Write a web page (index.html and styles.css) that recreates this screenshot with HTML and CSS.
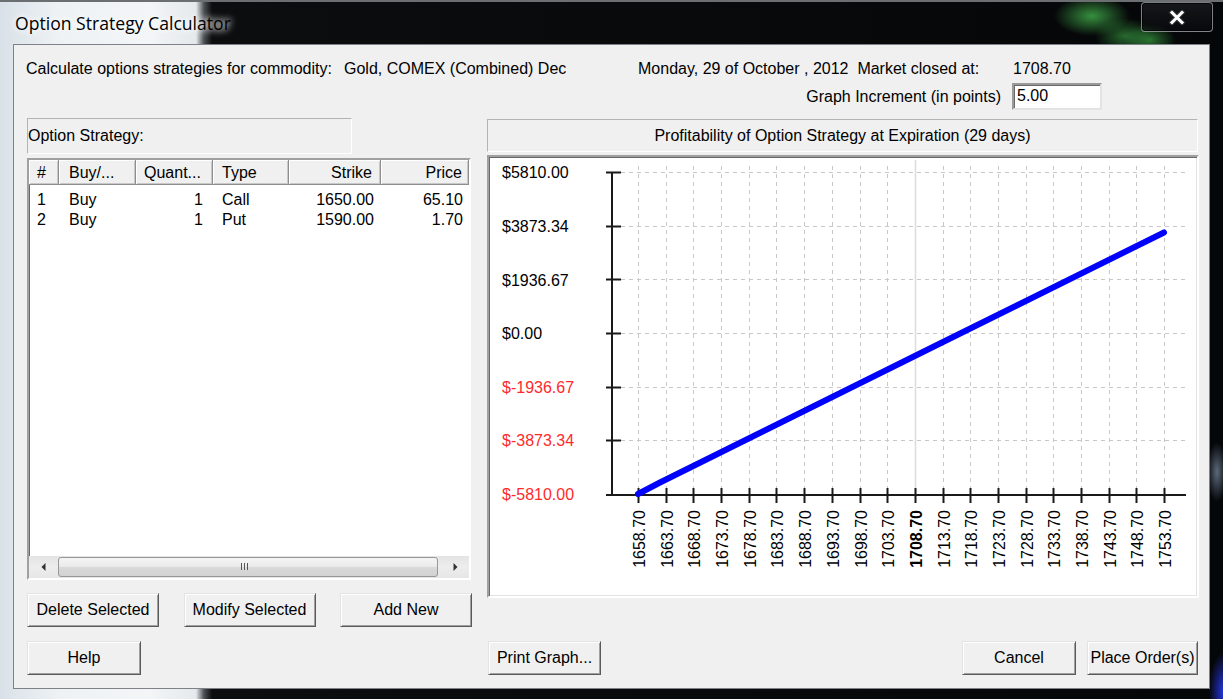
FILE: index.html
```html
<!DOCTYPE html>
<html>
<head>
<meta charset="utf-8">
<link rel="stylesheet" href="styles.css">
</head>
<body>
<div class="window">
  <div class="titlebar">
    <div class="title">Option Strategy Calculator</div>
    <div class="close">
      <svg width="18" height="15" viewBox="0 0 18 15"><path d="M4 2.5 L14 12.5 M14 2.5 L4 12.5" stroke="#333" stroke-width="5" stroke-linecap="square"/><path d="M4 2.5 L14 12.5 M14 2.5 L4 12.5" stroke="#fff" stroke-width="3" stroke-linecap="square"/></svg>
    </div>
  </div>
  <div class="client">
    <div class="info-row">
      <span class="c1">Calculate options strategies for commodity:</span>
      <span class="c2">Gold, COMEX (Combined) Dec</span>
      <span class="c3">Monday, 29 of October , 2012&nbsp; Market closed at:</span>
      <span class="c4">1708.70</span>
    </div>
    <div class="inc-row">
      <span class="inc-label">Graph Increment (in points)</span>
      <div class="input">5.00</div>
    </div>
    <div class="main">
      <div class="left">
        <div class="etched strategy-label">Option Strategy:</div>
        <div class="list">
          <div class="lv-head">
            <div class="hc w1">#</div>
            <div class="hc w2">Buy/...</div>
            <div class="hc w3">Quant...</div>
            <div class="hc w4">Type</div>
            <div class="hc w5 r">Strike</div>
            <div class="hc w6 r">Price</div>
          </div>
          <div class="lv-body">
            <div class="lv-row">
              <div class="dc w1">1</div>
              <div class="dc w2">Buy</div>
              <div class="dc w3 r">1</div>
              <div class="dc w4">Call</div>
              <div class="dc w5 r">1650.00</div>
              <div class="dc w6 r">65.10</div>
            </div>
            <div class="lv-row">
              <div class="dc w1">2</div>
              <div class="dc w2">Buy</div>
              <div class="dc w3 r">1</div>
              <div class="dc w4">Put</div>
              <div class="dc w5 r">1590.00</div>
              <div class="dc w6 r">1.70</div>
            </div>
          </div>
          <div class="hscroll">
            <div class="sb-arrow sb-left"><svg width="5" height="8" viewBox="0 0 5 8"><polygon points="4.5,0 0.5,4 4.5,8" fill="#333"/></svg></div>
            <div class="sb-thumb"><svg width="9" height="8" viewBox="0 0 9 8"><path d="M1.5 0 V7 M4.5 0 V7 M7.5 0 V7" stroke="#555" stroke-width="1"/></svg></div>
            <div class="sb-arrow sb-right"><svg width="5" height="8" viewBox="0 0 5 8"><polygon points="0.5,0 4.5,4 0.5,8" fill="#333"/></svg></div>
          </div>
        </div>
        <div class="btn-row">
          <div class="btn b132">Delete Selected</div>
          <div class="btn b132">Modify Selected</div>
          <div class="btn b132">Add New</div>
        </div>
      </div>
      <div class="right">
        <div class="etched chart-title">Profitability of Option Strategy at Expiration (29 days)</div>
        <div class="chart">
          <svg width="708" height="439" viewBox="489 157 708 439" class="plot">
            <g stroke="#c8c8c8" stroke-width="1" stroke-dasharray="4 4" fill="none">
              <path d="M621 172.5 H1186 M621 226.5 H1186 M621 279.5 H1186 M621 333.5 H1186 M621 387.5 H1186 M621 440.5 H1186"/>
              <path d="M638.5 166 V495 M666.5 166 V495 M693.5 166 V495 M721.5 166 V495 M749.5 166 V495 M776.5 166 V495 M804.5 166 V495 M832.5 166 V495 M860.5 166 V495 M887.5 166 V495 M943.5 166 V495 M970.5 166 V495 M998.5 166 V495 M1026.5 166 V495 M1053.5 166 V495 M1081.5 166 V495 M1109.5 166 V495 M1136.5 166 V495 M1164.5 166 V495"/>
            </g>
            <path d="M915.5 160 V495" stroke="#dcdcdc" stroke-width="1.5"/>
            <g stroke="#1a1a1a" stroke-width="2" fill="none">
              <path d="M612 172 V496"/>
              <path d="M606 495 H1186"/>
              <path d="M606 172.5 H621 M606 226.5 H621 M606 279.5 H621 M606 333.5 H621 M606 387.5 H621 M606 440.5 H621"/>
              <path d="M638.5 488 V503 M666.5 488 V503 M693.5 488 V503 M721.5 488 V503 M749.5 488 V503 M776.5 488 V503 M804.5 488 V503 M832.5 488 V503 M860.5 488 V503 M887.5 488 V503 M915.5 488 V503 M943.5 488 V503 M970.5 488 V503 M998.5 488 V503 M1026.5 488 V503 M1053.5 488 V503 M1081.5 488 V503 M1109.5 488 V503 M1136.5 488 V503 M1164.5 488 V503"/>
            </g>
            <polyline points="638,494 660,482.5 945,341 1164,232.5" fill="none" stroke="#0000ff" stroke-width="6" stroke-linecap="round" stroke-linejoin="round"/>
            <g class="ylab">
              <text x="502" y="178">$5810.00</text>
              <text x="502" y="232">$3873.34</text>
              <text x="502" y="286">$1936.67</text>
              <text x="502" y="339">$0.00</text>
              <text x="502" y="393" class="neg">$-1936.67</text>
              <text x="502" y="446" class="neg">$-3873.34</text>
              <text x="502" y="500" class="neg">$-5810.00</text>
            </g>
            <g class="xlab" text-anchor="end">
              <text transform="translate(644.5,510) rotate(-90)">1658.70</text>
              <text transform="translate(672.5,510) rotate(-90)">1663.70</text>
              <text transform="translate(699.5,510) rotate(-90)">1668.70</text>
              <text transform="translate(727.5,510) rotate(-90)">1673.70</text>
              <text transform="translate(755.5,510) rotate(-90)">1678.70</text>
              <text transform="translate(782.5,510) rotate(-90)">1683.70</text>
              <text transform="translate(810.5,510) rotate(-90)">1688.70</text>
              <text transform="translate(838.5,510) rotate(-90)">1693.70</text>
              <text transform="translate(866.5,510) rotate(-90)">1698.70</text>
              <text transform="translate(893.5,510) rotate(-90)">1703.70</text>
              <text transform="translate(921.5,510) rotate(-90)" class="bold">1708.70</text>
              <text transform="translate(949.5,510) rotate(-90)">1713.70</text>
              <text transform="translate(976.5,510) rotate(-90)">1718.70</text>
              <text transform="translate(1004.5,510) rotate(-90)">1723.70</text>
              <text transform="translate(1032.5,510) rotate(-90)">1728.70</text>
              <text transform="translate(1059.5,510) rotate(-90)">1733.70</text>
              <text transform="translate(1087.5,510) rotate(-90)">1738.70</text>
              <text transform="translate(1115.5,510) rotate(-90)">1743.70</text>
              <text transform="translate(1142.5,510) rotate(-90)">1748.70</text>
              <text transform="translate(1170.5,510) rotate(-90)">1753.70</text>
            </g>
          </svg>
        </div>
      </div>
    </div>
    <div class="footer">
      <div class="f-left">
        <div class="btn b-help">Help</div>
      </div>
      <div class="f-right">
        <div class="btn b-print">Print Graph...</div>
        <div class="spacer"></div>
        <div class="btn b-cancel">Cancel</div>
        <div class="btn b-place">Place Order(s)</div>
      </div>
    </div>
  </div>
</div>
</body>
</html>
```

FILE: styles.css
```css
html, body {
  margin: 0;
  padding: 0;
  background: #000;
}

.window {
  width: 1223px;
  height: 699px;
  box-sizing: border-box;
  display: flex;
  flex-direction: column;
  overflow: hidden;
  border-top: 2px solid #6c6f72;
  background:
    radial-gradient(ellipse 38px 20px at 1092px 14px, rgba(70, 190, 80, 0.75), rgba(70, 190, 80, 0) 100%),
    radial-gradient(ellipse 30px 18px at 1125px 34px, rgba(60, 170, 70, 0.6), rgba(60, 170, 70, 0) 100%),
    radial-gradient(ellipse 26px 16px at 1150px 38px, rgba(70, 200, 80, 0.55), rgba(70, 200, 80, 0) 100%),
    radial-gradient(ellipse 14px 40px at 1223px 690px, rgba(40, 60, 255, 0.85), rgba(40, 60, 255, 0) 100%),
    radial-gradient(ellipse 10px 30px at 1217px 470px, rgba(150, 170, 200, 0.6), rgba(150, 170, 200, 0) 100%),
    linear-gradient(to right, #d9e1e8 0, #eef2f5 60px, #f3f5f7 150px, #e4e9ed 196px, #4c5053 204px, #0c0d0f 212px, #050608 100%);
}

.titlebar {
  height: 42px;
  display: flex;
  align-items: flex-start;
  flex: none;
}

.title {
  font-family: "Open Sans", "Noto Sans", sans-serif;
  font-size: 17.6px;
  color: #000;
  padding-left: 15px;
  padding-top: 9px;
  line-height: 24px;
  text-shadow: 0 0 6px #fff, 0 0 10px #fff;
}

.close {
  margin-left: auto;
  margin-right: 10px;
  margin-top: 0;
  width: 72px;
  height: 30px;
  box-sizing: border-box;
  border: 1px solid rgba(200, 205, 210, 0.6);
  border-radius: 4px;
  background: linear-gradient(rgba(40, 44, 48, 0.45), rgba(10, 12, 14, 0.6));
  box-shadow: inset 0 0 0 1px rgba(0, 0, 0, 0.7);
  display: flex;
  align-items: center;
  justify-content: center;
}

.client {
  margin-left: 13px;
  width: 1197px;
  height: 645px;
  box-sizing: border-box;
  border: 1px solid #7d8288;
  background: #f0f0f0;
  font-family: "Liberation Sans", Arial, sans-serif;
  font-size: 16px;
  color: #000;
  flex: none;
}

.info-row {
  margin-top: 15px;
  height: 18px;
  line-height: 18px;
  padding-left: 12px;
  display: flex;
  white-space: nowrap;
}

.c1 { width: 318px; flex: none; }
.c2 { width: 294px; flex: none; }
.c3 { width: 375px; flex: none; }

.inc-row {
  margin-top: 5px;
  height: 27px;
  display: flex;
  justify-content: flex-end;
  align-items: center;
  padding-right: 107px;
}

.inc-label {
  margin-right: 11px;
}

.input {
  width: 90px;
  height: 27px;
  box-sizing: border-box;
  background: #fff;
  border-style: solid;
  border-width: 2px;
  border-color: #9a9a9a #e3e3e3 #e3e3e3 #9a9a9a;
  box-shadow: inset 1px 1px 0 #696969;
  padding-left: 3px;
  line-height: 22px;
}

.main {
  margin-top: 8px;
  padding-left: 13px;
  display: grid;
  grid-template-columns: 445px 712px;
  column-gap: 15px;
}

.left {
  display: flex;
  flex-direction: column;
}

.etched {
  box-sizing: border-box;
  border-style: solid;
  border-width: 1px;
  border-color: #b4b4b4 #ffffff #ffffff #b4b4b4;
  display: flex;
  align-items: center;
}

.strategy-label {
  width: 325px;
  height: 36px;
  padding-left: 0;
}

.list {
  margin-top: 4px;
  width: 444px;
  height: 422px;
  box-sizing: border-box;
  border-style: solid;
  border-width: 2px;
  border-color: #a0a0a0 #ffffff #ffffff #a0a0a0;
  box-shadow: inset 1px 1px 0 #696969;
  background: #fff;
  display: flex;
  flex-direction: column;
}

.lv-head {
  display: flex;
  height: 25px;
  flex: none;
}

.hc {
  box-sizing: border-box;
  height: 25px;
  line-height: 25px;
  background: #f0f0f0;
  border-right: 1px solid #8e8e8e;
  border-bottom: 1px solid #8e8e8e;
  box-shadow: inset 1px 1px 0 #fff, inset -1px -1px 0 #c8c8c8;
  padding: 0 8px;
  white-space: nowrap;
  overflow: hidden;
}

.w1 { width: 30px; padding-left: 8px; }
.w2 { width: 77px; padding-left: 10px; }
.w3 { width: 77px; }
.w4 { width: 76px; padding-left: 9px; }
.w5 { width: 92px; }
.w6 { width: 88px; padding-right: 6px; }

.r { text-align: right; }

.lv-body {
  flex: 1;
  padding-top: 5px;
}

.lv-row {
  display: flex;
  height: 20px;
  line-height: 20px;
}

.dc {
  box-sizing: border-box;
  padding: 0 8px;
  white-space: nowrap;
}

.dc.w1 { padding-left: 8px; }
.dc.w2 { padding-left: 10px; }
.dc.w4 { padding-left: 9px; }
.dc.w3 { padding-right: 10px; }
.dc.w5 { padding-right: 7px; }
.dc.w6 { padding-right: 6px; }

.hscroll {
  height: 22px;
  flex: none;
  display: flex;
  background: linear-gradient(to bottom, #e4e4e4, #ededed 50%, #e6e6e6);
}

.sb-arrow {
  display: flex;
  align-items: center;
}

.sb-left {
  width: 28px;
  flex: none;
  justify-content: center;
}

.sb-right {
  flex: 1;
  justify-content: center;
  padding-left: 3px;
}

.sb-thumb {
  width: 380px;
  flex: none;
  margin-left: 1px;
  margin-top: 1px;
  height: 20px;
  box-sizing: border-box;
  border: 1px solid #979797;
  border-radius: 3px;
  background: linear-gradient(to bottom, #f5f5f5, #e9e9e9 50%, #d9d9d9 51%, #d3d3d3);
  display: flex;
  align-items: center;
  justify-content: center;
  padding-right: 8px;
}

.btn-row {
  margin-top: 13px;
  height: 34px;
  display: flex;
  justify-content: space-between;
}

.btn {
  box-sizing: border-box;
  height: 34px;
  background: #f0f0f0;
  border-style: solid;
  border-width: 1px;
  border-color: #e3e3e3 #5a5a5a #5a5a5a #e3e3e3;
  box-shadow: inset 1px 1px 0 #ffffff, inset -1px -1px 0 #a0a0a0;
  display: flex;
  align-items: center;
  justify-content: center;
  white-space: nowrap;
}

.b132 { width: 132px; }

.right {
  display: flex;
  flex-direction: column;
}

.chart-title {
  margin-top: 1px;
  width: 711px;
  height: 33px;
  justify-content: center;
}

.chart {
  margin-top: 3px;
  width: 712px;
  height: 443px;
  box-sizing: border-box;
  border-style: solid;
  border-width: 2px;
  border-color: #a0a0a0 #ffffff #ffffff #a0a0a0;
  box-shadow: inset 1px 1px 0 #696969, inset -1px -1px 0 #e3e3e3;
  background: #fff;
}

.plot {
  display: block;
}

.plot text {
  font-family: "Liberation Sans", Arial, sans-serif;
  font-size: 16px;
  fill: #000;
}

.plot text.neg {
  fill: #ff2a2a;
}

.plot text.bold {
  font-weight: bold;
}

.footer {
  margin-top: 14px;
  padding-left: 13px;
  display: grid;
  grid-template-columns: 445px 712px;
  column-gap: 15px;
}

.f-left {
  display: flex;
}

.b-help { width: 114px; }

.f-right {
  display: flex;
}

.b-print {
  width: 113px;
  margin-left: 1px;
}

.spacer { flex: 1; }

.b-cancel { width: 114px; }

.b-place {
  width: 111px;
  margin-left: 11px;
  margin-right: 1px;
}
```
